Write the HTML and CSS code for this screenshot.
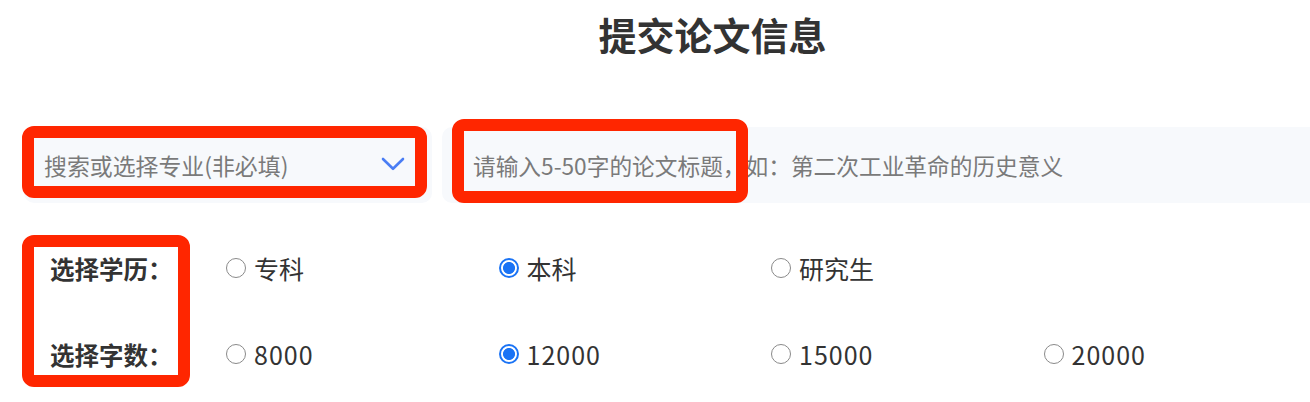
FILE: index.html
```html
<!DOCTYPE html>
<html lang="zh-CN">
<head>
<meta charset="utf-8">
<title>提交论文信息</title>
<link rel="stylesheet" href="styles.css">
</head>
<body>
<div class="page">
  <div class="form">
    <h1 class="title">提交论文信息</h1>
    <div class="fields">
      <div class="select">
        <span class="select-text">搜索或选择专业(非必填)</span>
        <svg class="chevron" width="24" height="14" viewBox="0 0 24 14"><path d="M2 2 L12 11.8 L22 2" fill="none" stroke="#4a7df4" stroke-width="2.6" stroke-linecap="round" stroke-linejoin="round"/></svg>
      </div>
      <input class="title-input" type="text" placeholder="请输入5-50字的论文标题，如：第二次工业革命的历史意义">
    </div>
    <div class="choice-row first">
      <div class="row-label">选择学历：</div>
      <label class="option"><input type="radio" name="edu" class="radio"><span>专科</span></label>
      <label class="option"><input type="radio" name="edu" class="radio" checked><span>本科</span></label>
      <label class="option"><input type="radio" name="edu" class="radio"><span>研究生</span></label>
    </div>
    <div class="choice-row">
      <div class="row-label">选择字数：</div>
      <label class="option"><input type="radio" name="words" class="radio"><span class="num">8000</span></label>
      <label class="option"><input type="radio" name="words" class="radio" checked><span class="num">12000</span></label>
      <label class="option"><input type="radio" name="words" class="radio"><span class="num">15000</span></label>
      <label class="option"><input type="radio" name="words" class="radio"><span class="num">20000</span></label>
    </div>
  </div>
  <div class="mark mark-select"></div>
  <div class="mark mark-input"></div>
  <div class="mark mark-labels"></div>
</div>
</body>
</html>
```

FILE: styles.css
```css
* { box-sizing: border-box; }
html, body {
  margin: 0;
  padding: 0;
  background: #ffffff;
}
body {
  font-family: "Noto Sans CJK SC", "Noto Sans", sans-serif;
  color: #333333;
}
.page {
  position: relative;
  width: 1310px;
  height: 402px;
  overflow: hidden;
}
.form {
  width: 1377px;
  margin-left: 24px;
}
.title {
  margin: 0;
  padding-top: 8px;
  font-size: 38px;
  line-height: 52px;
  font-weight: 700;
  text-align: center;
  color: #333333;
}
.fields {
  display: flex;
  gap: 10px;
  margin-top: 67px;
  height: 76px;
}
.select {
  width: 408px;
  height: 76px;
  flex: none;
  display: flex;
  align-items: center;
  justify-content: space-between;
  padding: 0 27px 0 20px;
  background: #f7f9fc;
  border-radius: 10px;
}
.select-text {
  font-size: 22.9px;
  color: #7a7a7a;
}
.chevron {
  display: block;
  margin-top: -2px;
}
.title-input {
  flex: 1;
  height: 76px;
  border: none;
  outline: none;
  background: #f7f9fc;
  border-radius: 10px;
  padding: 0 0 0 31px;
  font-family: "Noto Sans CJK SC", "Noto Sans", sans-serif;
  font-size: 22.7px;
  color: #333333;
}
.title-input::placeholder {
  color: #7a7a7a;
}
.choice-row {
  display: grid;
  grid-template-columns: 176px repeat(4, 272.5px);
  align-items: center;
  height: 56px;
  margin-top: 30px;
  padding-left: 26px;
}
.choice-row.first {
  margin-top: 37px;
}
.row-label {
  font-size: 24.5px;
  font-weight: 700;
  color: #333333;
}
.option {
  display: flex;
  align-items: center;
  gap: 8px;
  font-size: 25px;
  color: #333333;
}
.num {
  letter-spacing: 1px;
}
.radio {
  appearance: none;
  -webkit-appearance: none;
  margin: 0;
  width: 20px;
  height: 20px;
  border: 1.5px solid #8a8a8a;
  border-radius: 50%;
  background: #ffffff;
  flex: none;
}
.radio:checked {
  border: 2.5px solid #1a73f5;
  background: radial-gradient(circle, #1a73f5 0 5.6px, #ffffff 6.4px);
}
.mark {
  position: absolute;
  border: 12px solid #ff2600;
  border-radius: 12px;
  pointer-events: none;
}
.mark-select {
  left: 22px;
  top: 126px;
  width: 405px;
  height: 72px;
}
.mark-input {
  left: 452px;
  top: 119px;
  width: 296px;
  height: 84px;
}
.mark-labels {
  left: 22px;
  top: 235px;
  width: 168px;
  height: 152px;
}
```
